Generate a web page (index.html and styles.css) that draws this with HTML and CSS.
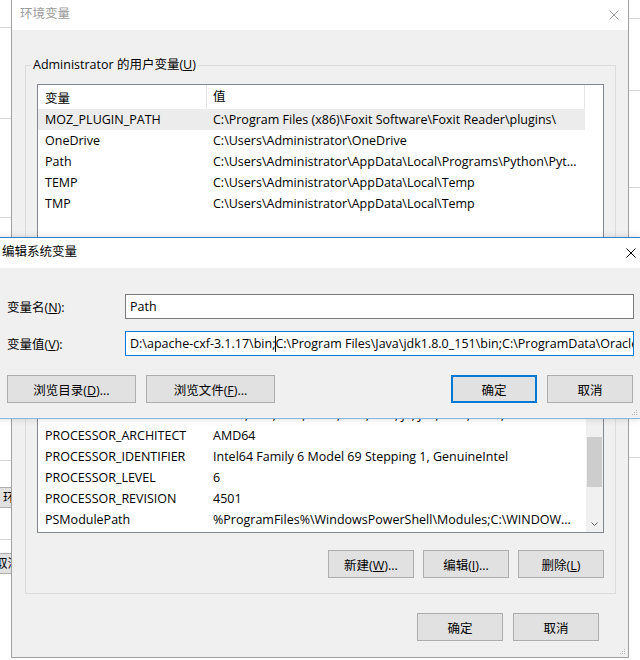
FILE: index.html
```html
<!DOCTYPE html>
<html lang="zh-CN">
<head>
  <meta charset="UTF-8" />
  <meta name="viewport" content="width=device-width, initial-scale=1.0" />
  <title>环境变量</title>

  <!-- 样式 -->
  <link rel="stylesheet" href="styles.css">
</head>

<body>
<div class="desktop">

  <!-- 最底层：系统属性窗口（左侧露出一条） -->
  <div class="behind behind-left">
    <div class="bl-band bl-a"></div>
    <div class="bl-band bl-b"></div>
    <div class="bl-band bl-c"></div>
    <div class="bl-band bl-d"></div>
    <div class="bl-btn bl-env">环境变量(N)...</div>
    <div class="bl-band bl-e"></div>
    <div class="bl-btn bl-cancel">取消</div>
  </div>

  <!-- 右侧露出的窗口边 -->
  <div class="behind behind-right">
    <div class="br-band br-a"></div>
    <div class="br-band br-b"></div>
    <div class="br-band br-c"></div>
    <div class="br-band br-d"></div>
  </div>

  <!-- 环境变量 对话框（非活动） -->
  <section class="win env">
    <header class="titlebar">
      <span class="title">环境变量</span>
      <svg class="close" width="10" height="10" viewBox="0 0 10 10"><path d="M0.5 0.5L9.5 9.5M9.5 0.5L0.5 9.5"/></svg>
    </header>

    <div class="env-body">
      <fieldset class="group">
        <legend>Administrator 的用户变量(<u>U</u>)</legend>
        <div class="list list-user">
          <div class="list-head"><span class="c1">变量</span><span class="c2">值</span></div>
          <div class="row sel"><span class="c1">MOZ_PLUGIN_PATH</span><span class="c2">C:\Program Files (x86)\Foxit Software\Foxit Reader\plugins\</span></div>
          <div class="row"><span class="c1">OneDrive</span><span class="c2">C:\Users\Administrator\OneDrive</span></div>
          <div class="row"><span class="c1">Path</span><span class="c2">C:\Users\Administrator\AppData\Local\Programs\Python\Pyt...</span></div>
          <div class="row"><span class="c1">TEMP</span><span class="c2">C:\Users\Administrator\AppData\Local\Temp</span></div>
          <div class="row"><span class="c1">TMP</span><span class="c2">C:\Users\Administrator\AppData\Local\Temp</span></div>
        </div>
        <div class="btn-row">
          <button class="btn">新建(<u>N</u>)...</button>
          <button class="btn">编辑(<u>E</u>)...</button>
          <button class="btn">删除(<u>D</u>)</button>
        </div>
      </fieldset>

      <fieldset class="group group-sys">
        <legend>系统变量(<u>S</u>)</legend>
        <div class="list list-sys">
          <div class="list-main">
            <div class="list-head"><span class="c1">变量</span><span class="c2">值</span></div>
            <div class="rows">
              <div class="row"><span class="c1">NUMBER_OF_PROCESSORS</span><span class="c2">4</span></div>
              <div class="row"><span class="c1">OS</span><span class="c2">Windows_NT</span></div>
              <div class="row"><span class="c1">Path</span><span class="c2">D:\apache-cxf-3.1.17\bin;C:\Program Files\Java\jdk1.8.0_...</span></div>
              <div class="row"><span class="c1">PATHEXT</span><span class="c2">.COM;.EXE;.BAT;.CMD;.VBS;.VBE;.JS;.JSE;.WSF;.WSH;.MSC</span></div>
              <div class="row"><span class="c1">PROCESSOR_ARCHITECT</span><span class="c2">AMD64</span></div>
              <div class="row"><span class="c1">PROCESSOR_IDENTIFIER</span><span class="c2">Intel64 Family 6 Model 69 Stepping 1, GenuineIntel</span></div>
              <div class="row"><span class="c1">PROCESSOR_LEVEL</span><span class="c2">6</span></div>
              <div class="row"><span class="c1">PROCESSOR_REVISION</span><span class="c2">4501</span></div>
              <div class="row"><span class="c1">PSModulePath</span><span class="c2">%ProgramFiles%\WindowsPowerShell\Modules;C:\WINDOW...</span></div>
            </div>
          </div>
          <div class="scrollbar">
            <div class="thumb"></div>
            <div class="arrow">
              <svg width="7" height="4" viewBox="0 0 7 4"><path d="M0.5 0.5L3.5 3.5L6.5 0.5"/></svg>
            </div>
          </div>
        </div>
        <div class="btn-row">
          <button class="btn">新建(<u>W</u>)...</button>
          <button class="btn">编辑(<u>I</u>)...</button>
          <button class="btn">删除(<u>L</u>)</button>
        </div>
      </fieldset>

      <div class="footer">
        <button class="btn">确定</button>
        <button class="btn">取消</button>
      </div>
    </div>

    <svg class="grip" width="7" height="7" viewBox="0 0 7 7"><path d="M5 1h1v1H5zM3 3h1v1H3zM5 3h1v1H5zM1 5h1v1H1zM3 5h1v1H3zM5 5h1v1H5z"/></svg>
  </section>

  <!-- 编辑系统变量 对话框（活动） -->
  <section class="win edit">
    <header class="titlebar">
      <span class="title">编辑系统变量</span>
      <svg class="close" width="10" height="10" viewBox="0 0 10 10"><path d="M0.5 0.5L9.5 9.5M9.5 0.5L0.5 9.5"/></svg>
    </header>

    <div class="edit-body">
      <div class="form">
        <label>变量名(<u>N</u>):</label>
        <div class="field">Path</div>
        <label>变量值(<u>V</u>):</label>
        <div class="field focus">D:\apache-cxf-3.1.17\bin;<span class="caret"></span>C:\Program Files\Java\jdk1.8.0_151\bin;C:\ProgramData\Oracle\Java\javapath;%SystemRoot%\system32</div>
      </div>

      <div class="edit-btns">
        <button class="btn btn-wide">浏览目录(<u>D</u>)...</button>
        <button class="btn btn-wide">浏览文件(<u>F</u>)...</button>
        <button class="btn btn-default">确定</button>
        <button class="btn">取消</button>
      </div>
    </div>

    <svg class="grip" width="7" height="7" viewBox="0 0 7 7"><path d="M5 1h1v1H5zM3 3h1v1H3zM5 3h1v1H5zM1 5h1v1H1zM3 5h1v1H3zM5 5h1v1H5z"/></svg>
  </section>

</div>
</body>
</html>
```
FILE: styles.css
```css
/* ─── 0. 重置 ───────────────────────────── */
*,*::before,*::after{box-sizing:border-box}
html,body{margin:0;padding:0;background:#fff}
body{
  font-family:"Open Sans","Noto Sans CJK SC",sans-serif;
  font-size:12.5px;color:#000;
}
u{text-underline-offset:1px}

.desktop{position:relative;width:640px;height:660px;overflow:hidden}

/* ─── 1. 背后的窗口 ───────────────────────── */
.behind{position:absolute;top:0;height:660px;background:#fff}
.behind-left{left:-90px;width:101px}
.bl-band{border-bottom:1px solid #d6d6d6}
.bl-a{height:28px}
.bl-b{height:91px}
.bl-c{height:99px}
.bl-d{height:243px}
.bl-btn{
  margin-left:70px;width:120px;height:21px;padding-left:22px;
  background:#e1e1e1;border:1px solid #adadad;line-height:19px;white-space:nowrap;
}
.bl-env{margin-top:26px}
.bl-e{height:32px}
.bl-cancel{margin-top:13px;padding-left:14px}

.behind-right{left:629px;width:20px}
.br-band{border-bottom:1px solid #d6d6d6}
.br-a{height:19px}
.br-b{height:72px}
.br-c{height:97px}
.br-d{height:270px}

/* ─── 2. 窗口通用 ─────────────────────────── */
.win{position:absolute;display:flex;flex-direction:column;background:#f0f0f0}
.titlebar{
  flex:none;height:30px;background:#fff;
  display:flex;align-items:center;justify-content:space-between;
}
.title{align-self:flex-start;line-height:27px}
.close path{fill:none;stroke-width:1}
.grip{position:absolute;right:2px;bottom:2px}
.grip path{fill:#b8b8b8}

.btn{
  height:28px;width:86px;padding:0;
  font:inherit;color:#000;white-space:nowrap;
  background:#e1e1e1;border:1px solid #adadad;
}

/* ─── 3. 环境变量（后面） ─────────────────── */
.env{left:11px;top:-1px;width:618px;height:659px;border:1px solid #a0a0a0}
.env .title{padding-left:8px;color:#9a9a9a}
.env .close{margin-right:9px}
.env .close path{stroke:#9a9a9a}

.env-body{flex:1;display:flex;flex-direction:column;padding:27px 12px 16px 13px}

.group{margin:0;min-width:0;padding:11px 11px 15px;border:1px solid #dcdcdc}
.group legend{padding:0 2px;margin-left:-6px;line-height:16px}
.group-sys{margin-top:10px}

.list{background:#fff;border:1px solid #828790;overflow:hidden}
.list-user{height:160px}
.list-sys{height:191px;display:flex}

.list-head{display:flex;height:24px;align-items:center;flex:none}
.list-head .c1{width:168px;padding-left:7px}
.list-head .c2{
  width:379px;padding-left:6px;line-height:24px;
  border-left:1px solid #e5e5e5;border-right:1px solid #e5e5e5;
}
.row{display:flex;width:547px;height:21px;align-items:center;flex:none;white-space:nowrap}
.row .c1{width:168px;padding-left:7px;overflow:hidden}
.row .c2{flex:1;padding-left:7px;overflow:hidden}
.row.sel{background:#ececec}

.list-main{flex:1;display:flex;flex-direction:column;min-width:0}
.rows{flex:1;display:flex;flex-direction:column;justify-content:flex-end;overflow:hidden;padding-bottom:2px}

.scrollbar{width:17px;flex:none;background:#f0f0f0;display:flex;flex-direction:column;justify-content:flex-end}
.thumb{height:50px;margin:0 1px 28px;background:#cdcdcd}
.arrow{height:17px;display:flex;align-items:center;justify-content:center}
.arrow path{fill:none;stroke:#606060;stroke-width:1}

.btn-row{display:flex;justify-content:flex-end;gap:9px;margin-top:17px}

.footer{display:flex;justify-content:flex-end;gap:10px;margin-top:19px;padding-right:17px}

/* ─── 4. 编辑系统变量（前面） ─────────────── */
.edit{
  left:-5px;top:237px;width:646px;height:182px;
  border:1px solid #2f80cc;border-bottom-color:#86b6e3;
  box-shadow:0 0 7px rgba(0,0,0,.15);
}
.edit .title{padding-left:6px}
.edit .close{margin-right:4px}
.edit .close path{stroke:#000}

.edit-body{flex:1;padding:26px 6px 15px 11px}

.form{display:grid;grid-template-columns:118px 1fr;row-gap:12px;align-items:center}
.field{
  height:25px;padding:0 4px;line-height:23px;
  background:#fff;border:1px solid #7a7a7a;
  white-space:nowrap;overflow:hidden;
}
.field.focus{border-color:#0078d7}
.caret{display:inline-block;width:1px;height:16px;margin-right:-1px;background:#000;vertical-align:-4px}

.edit-btns{display:flex;gap:10px;margin-top:19px;padding-right:1px}
.btn-wide{width:129px}
.btn-default{margin-left:auto;border:2px solid #0078d7}
```
